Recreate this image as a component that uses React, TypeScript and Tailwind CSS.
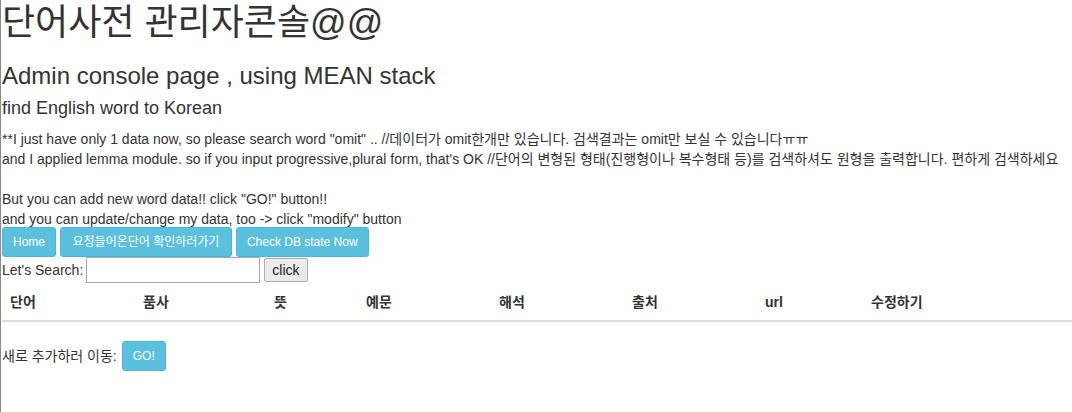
export default function App() {
  const font = { fontFamily: '"Liberation Sans", "Noto Sans CJK KR", sans-serif' };
  const btn =
    "inline-block h-[30px] px-[10px] text-[12px] leading-[18px] text-white bg-[#5bc0de] border border-[#46b8da] rounded-[3px]";
  const heads: [string, string][] = [
    ["단어", "w-[133px]"],
    ["품사", "w-[131px]"],
    ["뜻", "w-[92px]"],
    ["예문", "w-[133px]"],
    ["해석", "w-[133px]"],
    ["출처", "w-[133px]"],
    ["url", "w-[106px]"],
    ["수정하기", ""],
  ];

  return (
    <div
      style={font}
      className="min-h-screen bg-white border-l border-[#8a8a8a] pl-px pt-[3px] text-[#333] text-[14px] leading-[20px]"
    >
      <h1 className="m-0 text-[36px] leading-[1.1] font-normal">단어사전 관리자콘솔@@</h1>
      <h3 className="mt-[20px] mb-[10px] text-[24px] leading-[1.1] font-normal">
        Admin console page , using MEAN stack
      </h3>
      <h4 className="mt-[10px] mb-[10px] text-[18px] leading-[1.1] font-normal">
        find English word to Korean
      </h4>

      <div className="whitespace-nowrap">
        <div>
          **I just have only 1 data now, so please search word "omit" .. //데이터가 omit한개만 있습니다. 검색결과는 omit만 보실 수 있습니다ㅠㅠ
        </div>
        <div>
          and I applied lemma module. so if you input progressive,plural form, that's OK //단어의 변형된 형태(진행형이나 복수형태 등)를 검색하셔도 원형을 출력합니다. 편하게 검색하세요
        </div>
        <div className="h-[20px]" />
        <div>But you can add new word data!! click "GO!" button!!</div>
        <div>and you can update/change my data, too -&gt; click "modify" button</div>
      </div>

      <div className="flex gap-[4px] -mt-[2px]">
        <button className={btn}>Home</button>
        <button className={`${btn} px-[11.5px]`}>요청들어온단어 확인하러가기</button>
        <button className={btn}>Check DB state Now</button>
      </div>

      <div className="flex items-center h-[27px]">
        <span>Let's Search:</span>
        <input
          type="text"
          className="ml-[3px] w-[174px] h-[26px] border border-[#a9a9a9] bg-white outline-none"
        />
        <button className="ml-[4px] h-[24px] px-[7px] text-[14px] leading-[20px] text-[#222] bg-[#ebebeb] border border-[#adadad] rounded-[2px]">
          click
        </button>
      </div>

      <table className="w-full table-fixed border-collapse mb-[19px]">
        <thead>
          <tr>
            {heads.map(([h, w]) => (
              <th
                key={h}
                className={`${w} p-[8px] text-left font-bold leading-[20px] border-b-2 border-[#ddd]`}
              >
                {h}
              </th>
            ))}
          </tr>
        </thead>
        <tbody />
      </table>

      <div className="flex items-center gap-[5px]">
        <span>새로 추가하러 이동:</span>
        <button className={`${btn} px-[10.5px]`}>GO!</button>
      </div>
    </div>
  );
}
